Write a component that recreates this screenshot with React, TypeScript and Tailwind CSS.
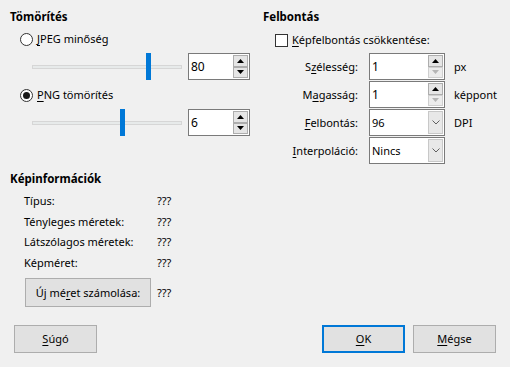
import React from "react";

function UpTri({ disabled }: { disabled?: boolean }) {
  return (
    <svg width="7" height="4" viewBox="0 0 7 4">
      <polygon points="0,4 7,4 3.5,0" fill={disabled ? "#b5b5b5" : "#000"} />
    </svg>
  );
}
function DownTri({ disabled }: { disabled?: boolean }) {
  return (
    <svg width="7" height="4" viewBox="0 0 7 4">
      <polygon points="0,0 7,0 3.5,4" fill={disabled ? "#b5b5b5" : "#000"} />
    </svg>
  );
}

function SpinButtons({ lowerDisabled }: { lowerDisabled?: boolean }) {
  return (
    <div className="flex flex-col w-[15px] py-[1px] mr-[1px]">
      <div className="h-[12px] border border-[#adadad] bg-[#e5e5e5] flex items-center justify-center">
        <UpTri />
      </div>
      <div
        className={
          lowerDisabled
            ? "h-[12px] border border-[#cfcfcf] bg-[#ececec] flex items-center justify-center"
            : "h-[12px] border border-[#adadad] bg-[#e5e5e5] flex items-center justify-center"
        }
      >
        <DownTri disabled={lowerDisabled} />
      </div>
    </div>
  );
}

function SpinBox({ value, w, lowerDisabled }: { value: string; w: string; lowerDisabled?: boolean }) {
  return (
    <div className={`${w} h-[27px] border border-[#7a7a7a] bg-white flex`}>
      <div className="flex-1 pl-[2px] flex items-center text-[12px]">{value}</div>
      <SpinButtons lowerDisabled={lowerDisabled} />
    </div>
  );
}

function Combo({ value }: { value: string }) {
  return (
    <div className="w-[76px] h-[27px] border border-[#7a7a7a] bg-white flex">
      <div className="flex-1 pl-[2px] flex items-center">{value}</div>
      <div className="w-[15px] my-[1px] mr-[1px] border border-[#c8c8c8] bg-[#e8e8e8] flex items-center justify-center">
        <svg width="8" height="5" viewBox="0 0 8 5">
          <polyline points="0.5,0.5 4,4 7.5,0.5" fill="none" stroke="#606060" strokeWidth="1" />
        </svg>
      </div>
    </div>
  );
}

function Slider({ left }: { left: number }) {
  return (
    <div className="relative w-[150px] h-[27px] flex items-center">
      <div className="w-full h-[4px] bg-[#e7eaea] border border-[#d6d6d6]" />
      <div className="absolute top-0 h-[27px] w-[5px] bg-[#0078d7]" style={{ left }} />
    </div>
  );
}

function Radio({ checked }: { checked?: boolean }) {
  return (
    <div className="w-[13px] h-[13px] rounded-full border border-[#333] bg-white flex items-center justify-center">
      {checked && <div className="w-[7px] h-[7px] rounded-full bg-[#1a1a1a]" />}
    </div>
  );
}

function Btn({ children, className }: { children: React.ReactNode; className?: string }) {
  return (
    <div className={`h-[28px] flex items-center justify-center bg-[#e1e1e1] ${className ?? "border border-[#adadad]"}`}>
      {children}
    </div>
  );
}

function Row({ label, children, unit }: { label: React.ReactNode; children: React.ReactNode; unit?: string }) {
  return (
    <div className="flex items-center h-[27px]">
      <div className="w-[95px] text-right">{label}</div>
      <div className="ml-[11px]">{children}</div>
      {unit && <div className="ml-[9px]">{unit}</div>}
    </div>
  );
}

export default function App() {
  return (
    <div className="w-[510px] h-[367px] bg-[#f0f0f0] text-black text-[11px] leading-[16px] font-['Noto_Sans',sans-serif] flex flex-col">
      <div className="flex pt-[9px]">
        {/* left column */}
        <div className="w-[253px] pl-[10px] flex flex-col">
          <div className="font-bold h-[16px] text-[11.5px]">Tömörítés</div>
          <div className="flex items-center gap-[4px] ml-[10px] mt-[6px] h-[16px]">
            <Radio />
            <span>
              <u className="underline-offset-2">J</u>PEG minőség
            </span>
          </div>
          <div className="flex items-center ml-[22px] mt-[6px] gap-[6px]">
            <Slider left={114} />
            <SpinBox value="80" w="w-[62px]" />
          </div>
          <div className="flex items-center gap-[4px] ml-[10px] mt-[7px] h-[16px]">
            <Radio checked />
            <span>
              <u className="underline-offset-2">P</u>NG tömörítés
            </span>
          </div>
          <div className="flex items-center ml-[22px] mt-[6px] gap-[6px]">
            <Slider left={88} />
            <SpinBox value="6" w="w-[62px]" />
          </div>
        </div>
        {/* right column */}
        <div className="flex-1 pl-[10px] flex flex-col">
          <div className="font-bold h-[16px] text-[11.5px]">Felbontás</div>
          <div className="flex items-center gap-[4px] ml-[12px] mt-[7px] h-[16px]">
            <div className="w-[13px] h-[13px] border border-[#333] bg-white" />
            <span>
              <u className="underline-offset-2">K</u>épfelbontás csökkentése:
            </span>
          </div>
          <div className="flex flex-col gap-[1px] mt-[5px]">
            <Row
              label={
                <span>
                  S<u className="underline-offset-2">z</u>élesség:
                </span>
              }
              unit="px"
            >
              <SpinBox value="1" w="w-[76px]" lowerDisabled />
            </Row>
            <Row
              label={
                <span>
                  M<u className="underline-offset-2">a</u>gasság:
                </span>
              }
              unit="képpont"
            >
              <SpinBox value="1" w="w-[76px]" lowerDisabled />
            </Row>
            <Row
              label={
                <span>
                  <u className="underline-offset-2">F</u>elbontás:
                </span>
              }
              unit="DPI"
            >
              <Combo value="96" />
            </Row>
            <Row
              label={
                <span>
                  <u className="underline-offset-2">I</u>nterpoláció:
                </span>
              }
            >
              <Combo value="Nincs" />
            </Row>
          </div>
        </div>
      </div>

      {/* info */}
      <div className="pl-[10px] mt-[7px] flex flex-col">
        <div className="font-bold h-[16px] text-[11.5px]">Képinformációk</div>
        <div className="flex flex-col ml-[14px] mt-[4px]">
          {["Típus:", "Tényleges méretek:", "Látszólagos méretek:", "Képméret:"].map((l) => (
            <div key={l} className="flex items-center h-[20.5px]">
              <div className="w-[133px]">{l}</div>
              <div>???</div>
            </div>
          ))}
          <div className="flex items-center mt-[5px]">
            <div className="w-[126px] h-[29px] ml-[1px] flex items-center justify-center bg-[#e1e1e1] border border-[#adadad]">
              <span>
                Új mé<u className="underline-offset-2">r</u>et számolása:
              </span>
            </div>
            <div className="ml-[6px]">???</div>
          </div>
        </div>
      </div>

      {/* buttons */}
      <div className="flex items-center px-[14px] mt-auto mb-[14px]">
        <Btn className="w-[83px] border border-[#adadad]">
          <span>
            <u className="underline-offset-2">S</u>úgó
          </span>
        </Btn>
        <div className="flex-1" />
        <Btn className="w-[83px] border-2 border-[#0078d7]">
          <span>
            <u className="underline-offset-2">O</u>K
          </span>
        </Btn>
        <Btn className="w-[83px] ml-[8px] border border-[#adadad]">
          <span>
            <u className="underline-offset-2">M</u>égse
          </span>
        </Btn>
      </div>
    </div>
  );
}
